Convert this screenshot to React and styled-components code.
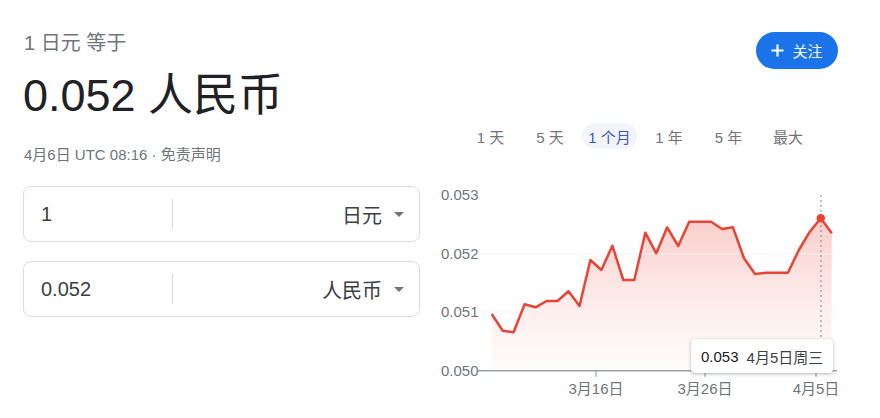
import React from "react";
import styled, { createGlobalStyle } from "styled-components";

const GlobalStyle = createGlobalStyle`
  html, body { margin: 0; padding: 0; background: #fff; }
  body { font-family: "Liberation Sans", "Noto Sans CJK SC", sans-serif; }
  * { box-sizing: border-box; }
`;

const Page = styled.div`
  width: 880px;
  height: 418px;
  display: flex;
  padding-left: 23px;
  gap: 20px;
  overflow: hidden;
`;

const LeftCol = styled.div`
  width: 397px;
  display: flex;
  flex-direction: column;
  padding-top: 31px;
`;

const Subtitle = styled.div`
  font-size: 20px;
  line-height: 24px;
  color: #70757a;
  padding-left: 1px;
`;

const BigValue = styled.div`
  margin-top: 13px;
  font-size: 45px;
  line-height: 56px;
  height: 56px;
  color: #202124;
`;

const DateLine = styled.div`
  margin-top: 21px;
  font-size: 15px;
  line-height: 20px;
  color: #70757a;
  padding-left: 1px;
`;

const Converter = styled.div`
  margin-top: 21px;
  display: flex;
  flex-direction: column;
  gap: 19px;
`;

const InputBox = styled.div`
  height: 56px;
  border: 1px solid #dadce0;
  border-radius: 8px;
  display: flex;
  align-items: center;
`;

const Amount = styled.div`
  width: 149px;
  padding-left: 17px;
  font-size: 20px;
  color: #3c4043;
  height: 30px;
  line-height: 30px;
  border-right: 1px solid #dadce0;
`;

const CurrencySelect = styled.div`
  flex: 1;
  display: flex;
  align-items: center;
  justify-content: flex-end;
  padding-right: 15px;
  gap: 12px;
  font-size: 20px;
  color: #3c4043;
`;

const Caret = styled.span`
  width: 0;
  height: 0;
  border-left: 5.5px solid transparent;
  border-right: 5.5px solid transparent;
  border-top: 5.5px solid #70757a;
`;

const RightCol = styled.div`
  width: 440px;
  display: flex;
  flex-direction: column;
  padding-top: 32px;
`;

const FollowButton = styled.button`
  align-self: flex-end;
  margin-right: 42px;
  height: 37px;
  width: 82px;
  border: none;
  border-radius: 19px;
  background: #1a73e8;
  color: #fff;
  display: flex;
  align-items: center;
  justify-content: center;
  gap: 8px;
  font-family: inherit;
  font-size: 15px;
  padding: 0;
`;

const Tabs = styled.div`
  margin-top: 54px;
  display: flex;
  gap: 4.5px;
  padding-left: 23px;
`;

const Tab = styled.div`
  width: 55px;
  height: 26px;
  border-radius: 13px;
  display: flex;
  align-items: center;
  justify-content: center;
  font-size: 15px;
  white-space: pre;
  color: ${(p) => (p.$active ? "#3c56c4" : "#70757a")};
  background: ${(p) => (p.$active ? "#f3f5fb" : "transparent")};
`;

const ChartWrap = styled.div`
  position: relative;
  margin-top: 31px;
  width: 440px;
  height: 220px;
`;

const Tooltip = styled.div`
  position: absolute;
  left: 251px;
  top: 159px;
  width: 142px;
  height: 34px;
  background: #fff;
  border-radius: 4px;
  box-shadow: 0 1px 3px rgba(60, 64, 67, 0.3), 0 1px 4px rgba(60, 64, 67, 0.12);
  display: flex;
  align-items: center;
  padding-left: 10px;
  gap: 8px;
  font-size: 15px;
  color: #202124;
  white-space: nowrap;
`;

const TipDate = styled.span`
  color: #3c4043;
`;

const ys = [
  134, 150.7, 152.3, 124.3, 127.3, 121, 121, 111.3, 126, 80, 90, 65.7, 100, 100,
  52.7, 73.3, 47.3, 66, 41.7, 41.7, 41.7, 49, 47.3, 78.3, 94, 92.7, 92.7, 92.7,
  70, 51.7, 38.3, 53.3,
];
const pts = ys.map((y, i) => [51.7 + i * 10.97, y]);
const AXIS_Y = 190.7;
const linePath = pts.map((p, i) => `${i ? "L" : "M"}${p[0].toFixed(1)},${p[1]}`).join(" ");
const areaPath = `${linePath} L${pts[pts.length - 1][0].toFixed(1)},${AXIS_Y} L${pts[0][0].toFixed(1)},${AXIS_Y} Z`;

const yLabels = [
  ["0.053", 15],
  ["0.052", 74],
  ["0.051", 132],
  ["0.050", AXIS_Y],
];
const xTicks = [
  ["3月16日", 156],
  ["3月26日", 265],
  ["4月5日", 376],
];

const labelFont = '"Liberation Sans", "Noto Sans CJK SC", sans-serif';

function Chart() {
  return (
    <ChartWrap>
      <svg width="440" height="220" viewBox="0 0 440 220">
        <defs>
          <linearGradient id="area" x1="0" y1="0" x2="0" y2="1" gradientUnits="objectBoundingBox">
            <stop offset="0" stopColor="#ea4335" stopOpacity="0.26" />
            <stop offset="0.55" stopColor="#ea4335" stopOpacity="0.1" />
            <stop offset="1" stopColor="#ea4335" stopOpacity="0.01" />
          </linearGradient>
        </defs>
        <path d={areaPath} fill="url(#area)" />
        <line x1="40" x2="397" y1="74" y2="74" stroke="#f3f3f5" strokeOpacity="0.8" strokeWidth="1" />
        <line x1="40" x2="397" y1="132" y2="132" stroke="#f3f3f5" strokeOpacity="0.8" strokeWidth="1" />
        <line x1="381" x2="381" y1="15" y2={AXIS_Y} stroke="#80868b" strokeWidth="1" strokeDasharray="2 3" />
        <path d={linePath} fill="none" stroke="#ea4335" strokeWidth="2.5" strokeLinejoin="round" />
        <circle cx="380.8" cy="38.3" r="4.2" fill="#ea4335" />
        <line x1="38" x2="397" y1={AXIS_Y} y2={AXIS_Y} stroke="#9aa0a6" strokeWidth="1.6" />
        {xTicks.map(([t, x]) => (
          <line key={t} x1={x} x2={x} y1={AXIS_Y} y2={AXIS_Y + 6} stroke="#9aa0a6" strokeWidth="1.2" />
        ))}
        {yLabels.map(([t, y]) => (
          <text key={t} x="1" y={y + 5.4} fontSize="15" fill="#70757a" fontFamily={labelFont}>
            {t}
          </text>
        ))}
        {xTicks.map(([t, x]) => (
          <text key={t} x={x} y="213.5" fontSize="15" fill="#70757a" textAnchor="middle" fontFamily={labelFont}>
            {t}
          </text>
        ))}
      </svg>
      <Tooltip>
        <span>0.053</span>
        <TipDate>4月5日周三</TipDate>
      </Tooltip>
    </ChartWrap>
  );
}

const tabs = ["1 天", "5 天", "1 个月", "1 年", "5 年", "最大"];

export default function App() {
  return (
    <>
      <GlobalStyle />
      <Page>
        <LeftCol>
          <Subtitle>1 日元 等于</Subtitle>
          <BigValue>0.052 人民币</BigValue>
          <DateLine>4月6日 UTC 08:16 · 免责声明</DateLine>
          <Converter>
            <InputBox>
              <Amount>1</Amount>
              <CurrencySelect>
                日元
                <Caret />
              </CurrencySelect>
            </InputBox>
            <InputBox>
              <Amount>0.052</Amount>
              <CurrencySelect>
                人民币
                <Caret />
              </CurrencySelect>
            </InputBox>
          </Converter>
        </LeftCol>
        <RightCol>
          <FollowButton>
            <svg width="13" height="13" viewBox="0 0 13 13">
              <path d="M6.5 0.5v12M0.5 6.5h12" stroke="#fff" strokeWidth="2.2" />
            </svg>
            关注
          </FollowButton>
          <Tabs>
            {tabs.map((t) => (
              <Tab key={t} $active={t === "1 个月"}>
                {t}
              </Tab>
            ))}
          </Tabs>
          <Chart />
        </RightCol>
      </Page>
    </>
  );
}
